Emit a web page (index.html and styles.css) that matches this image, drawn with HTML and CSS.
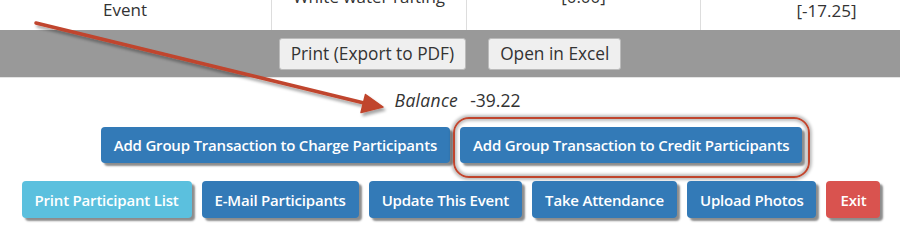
FILE: index.html
```html
<!DOCTYPE html>
<html lang="en">
<head>
  <meta charset="UTF-8">
  <title>Event Transactions</title>
  <link rel="stylesheet" href="styles.css">
</head>
<body>
  <div class="page">
    <!-- last row of the transactions table, scrolled mostly out of view -->
    <div class="table-strip">
      <div class="cell cell-event">Event</div>
      <div class="cell cell-high">White water rafting</div>
      <div class="cell cell-high">[0.00]</div>
      <div class="cell cell-low">[-17.25]</div>
    </div>

    <div class="export-bar">
      <button class="plain-btn">Print (Export to PDF)</button>
      <button class="plain-btn">Open in Excel</button>
    </div>

    <div class="balance"><em>Balance</em><span class="amount">-39.22</span></div>

    <div class="btn-row group-row">
      <a href="#" class="btn btn-primary">Add Group Transaction to Charge Participants</a>
      <a href="#" class="btn btn-primary highlighted">Add Group Transaction to Credit Participants</a>
    </div>

    <div class="btn-row action-row">
      <a href="#" class="btn btn-info">Print Participant List</a>
      <a href="#" class="btn btn-primary">E-Mail Participants</a>
      <a href="#" class="btn btn-primary">Update This Event</a>
      <a href="#" class="btn btn-primary">Take Attendance</a>
      <a href="#" class="btn btn-primary">Upload Photos</a>
      <a href="#" class="btn btn-danger btn-exit">Exit</a>
    </div>

    <!-- annotation arrow drawn over the page -->
    <svg class="arrow" width="900" height="240" viewBox="0 0 900 240">
      <defs>
        <filter id="arrowShadow" x="-10%" y="-10%" width="130%" height="150%">
          <feDropShadow dx="2" dy="3" stdDeviation="1.5" flood-color="#000" flood-opacity="0.35"/>
        </filter>
      </defs>
      <g filter="url(#arrowShadow)" fill="#c0452d" stroke="#c0452d">
        <line x1="36" y1="23" x2="364" y2="103" stroke-width="3.5" stroke-linecap="round"/>
        <polygon points="383,107 361,112.5 365.5,94.5" stroke-width="1.5" stroke-linejoin="round"/>
      </g>
    </svg>
  </div>
</body>
</html>
```

FILE: styles.css
```css
/* General page */
body {
  margin: 0;
  font-family: "Open Sans", "DejaVu Sans", sans-serif;
  color: #333;
  background-color: #fff;
}

.page {
  position: relative;
  width: 900px;
  height: 240px;
  overflow: hidden;
}

/* Table strip: only the bottom of the row is in view */
.table-strip {
  display: grid;
  grid-template-columns: 271px 195px 234px 252px;
  grid-template-rows: 50px;
  margin-top: -20px;
  height: 50px;
  overflow: hidden;
  font-size: 17px;
  line-height: 20px;
  color: #333;
}

.cell {
  display: flex;
  align-items: flex-end;
  justify-content: center;
  border-left: 1px solid #ddd;
}

.cell-event {
  border-left: none;
  padding-right: 21px;
  padding-bottom: 10px;
}

.cell-high {
  padding-bottom: 23px;
}

.cell-low {
  padding-bottom: 9px;
}

/* Export bar */
.export-bar {
  display: flex;
  justify-content: center;
  align-items: center;
  gap: 22px;
  height: 47px;
  background-color: #999;
  border-bottom: 1px solid #e4e4e4;
}

.plain-btn {
  height: 32px;
  padding: 0 11px;
  font-family: inherit;
  font-size: 17.3px;
  color: #333;
  background-color: #efefef;
  border: 1px solid #bbb;
  border-radius: 3px;
}

/* Balance line */
.balance {
  margin-top: 10px;
  text-align: center;
  font-size: 17.5px;
  line-height: 24px;
  padding-left: 15px;
}

.balance em {
  letter-spacing: 0.3px;
}

.amount {
  margin-left: 12px;
}

/* Buttons */
.btn-row {
  display: flex;
  justify-content: center;
  gap: 10px;
}

.group-row {
  margin-top: 15px;
  padding-left: 3px;
}

.action-row {
  margin-top: 18px;
  padding-left: 2px;
}

.btn {
  position: relative;
  display: inline-block;
  padding: 8px 13px;
  font-size: 15px;
  font-weight: 600;
  line-height: 20px;
  letter-spacing: -0.2px;
  color: #fff;
  text-decoration: none;
  border-radius: 4px;
  box-shadow: 3px 3px 2px rgba(0, 0, 0, 0.45);
}

.action-row .btn {
  padding-top: 9px;
  padding-bottom: 8px;
}

.action-row .btn-exit {
  padding-left: 14px;
  padding-right: 14px;
}

.btn-primary {
  background-color: #337ab7;
}

.btn-info {
  background-color: #5bc0de;
}

.btn-danger {
  background-color: #d9534f;
}

/* Red ring around the highlighted button */
.highlighted::after {
  content: "";
  position: absolute;
  top: -10px;
  left: -7px;
  right: -8px;
  bottom: -15px;
  border: 2px solid #c0452d;
  border-radius: 16px;
  box-shadow: 0 0 3px 2px rgba(0, 0, 0, 0.25), inset 0 0 3px 2px rgba(0, 0, 0, 0.25);
}

.arrow {
  position: absolute;
  top: 0;
  left: 0;
  pointer-events: none;
}
```
